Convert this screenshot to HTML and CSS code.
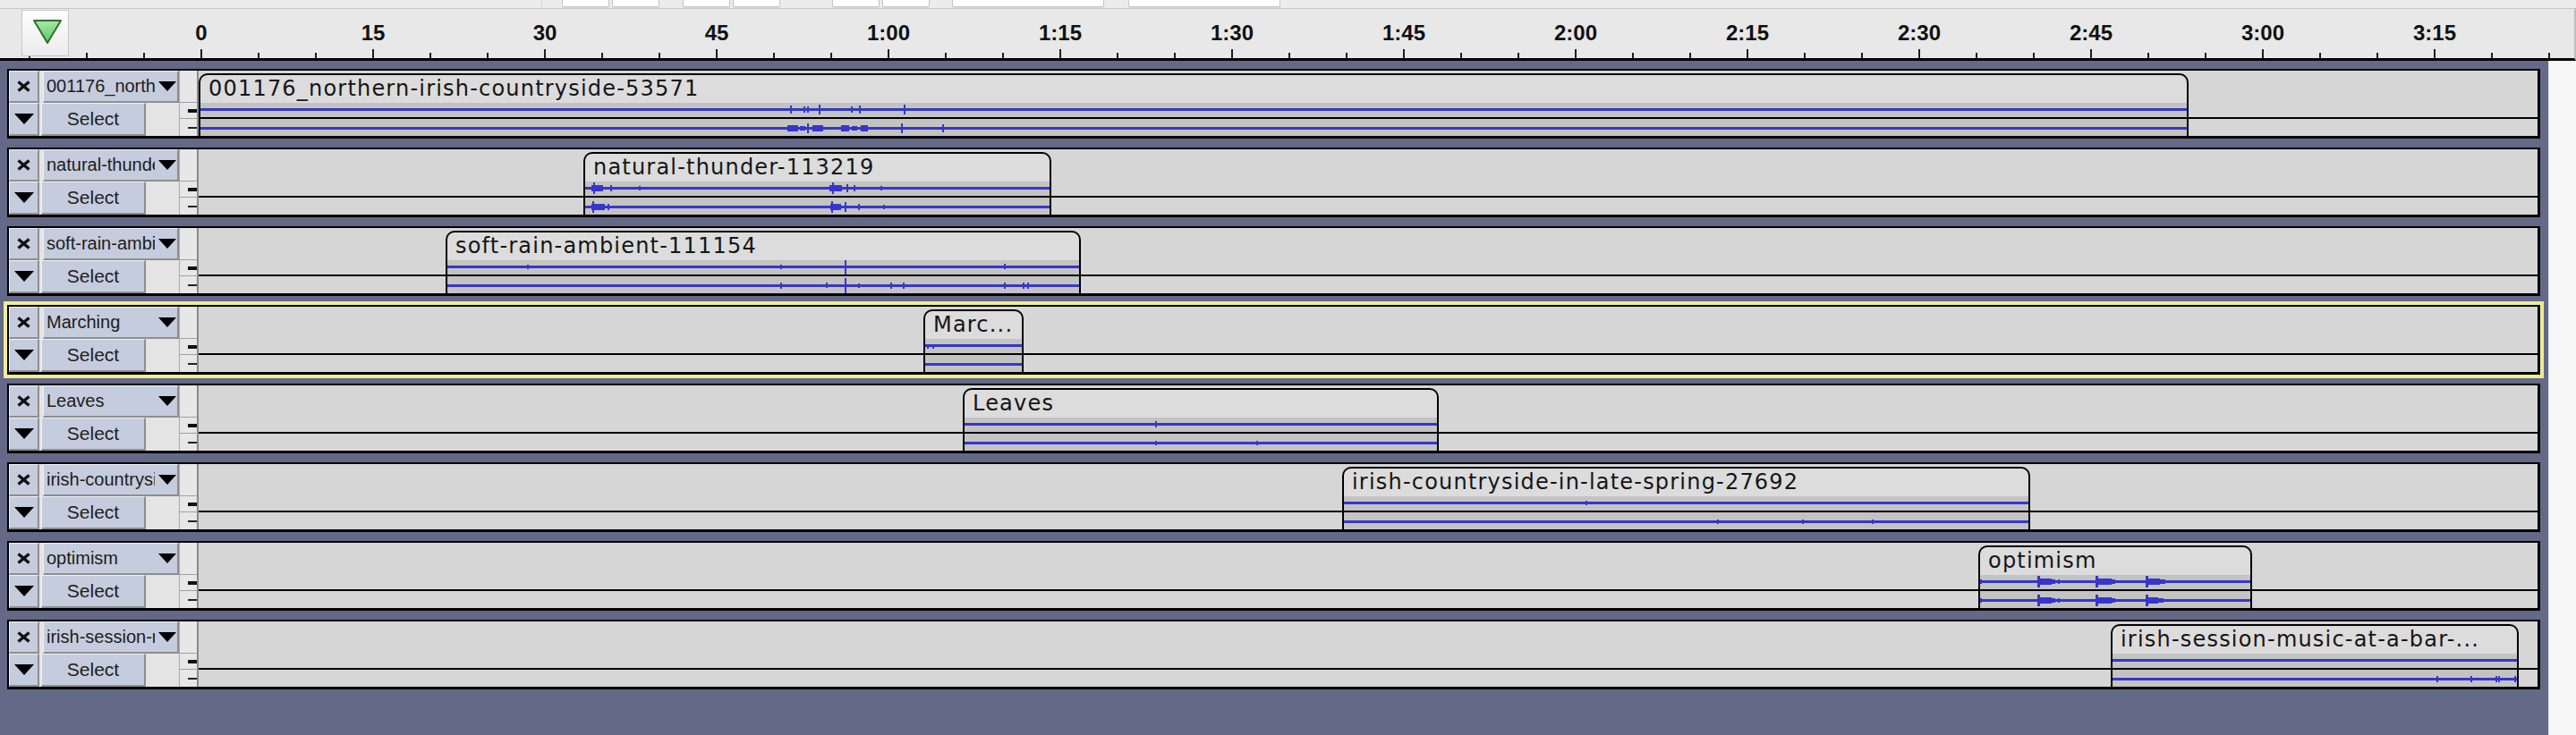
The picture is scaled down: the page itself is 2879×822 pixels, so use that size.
FILE: index.html
```html
<!DOCTYPE html>
<html>
<head>
<meta charset="utf-8">
<title>Tracks</title>
<link rel="stylesheet" href="styles.css">
</head>
<body>
<div class="topstrip">
  <div class="tb-divider"></div>
  <div class="tb-group g1"><div class="tb-btn"></div><div class="tb-btn"></div></div>
  <div class="tb-group g2"><div class="tb-btn"></div><div class="tb-btn"></div></div>
  <div class="tb-group g3"><div class="tb-btn"></div><div class="tb-btn"></div></div>
  <div class="tb-group g4"><div class="tb-btn tb-wide"></div></div>
  <div class="tb-group g5"><div class="tb-btn tb-wide"></div></div>
</div>
<div class="ruler">
  <div class="play-btn">
    <svg width="51" height="50" viewBox="0 0 51 50"><defs><linearGradient id="g" x1="0" y1="0" x2="0" y2="1"><stop offset="0" stop-color="#a6e8a6"/><stop offset="1" stop-color="#62c462"/></linearGradient></defs><path d="M13 11H43L28 36Z" fill="url(#g)" stroke="#2f6f2f" stroke-width="2" stroke-linejoin="round"/></svg>
  </div>
  <div class="ruler-labels">
    <span class="rl">0</span><span class="rl">15</span><span class="rl">30</span><span class="rl">45</span><span class="rl">1:00</span><span class="rl">1:15</span><span class="rl">1:30</span><span class="rl">1:45</span><span class="rl">2:00</span><span class="rl">2:15</span><span class="rl">2:30</span><span class="rl">2:45</span><span class="rl">3:00</span><span class="rl">3:15</span>
  </div>
</div>
<div class="main">
  <div class="tracks">

    <div class="track">
      <div class="panel">
        <div class="prow1">
          <div class="cell c-close"><svg class="ico-x" width="15" height="13" viewBox="0 0 15 13"><path d="M1.5 1.5L13.5 11.5M13.5 1.5L1.5 11.5"/></svg></div>
          <div class="cell c-name"><span class="name">001176_northern-irish-countryside-53571</span><svg class="tri" width="20" height="11" viewBox="0 0 20 11"><path d="M0 0H20L10 11Z"/></svg></div>
        </div>
        <div class="prow2">
          <div class="cell c-menu"><svg class="tri" width="22" height="12" viewBox="0 0 22 12"><path d="M0 0H22L11 12Z"/></svg></div>
          <div class="cell c-select">Select</div>
        </div>
      </div>
      <div class="dashcol"><div class="dc-top"></div><div class="dc-a"><i class="dash-thick"></i></div><div class="dc-b"><i class="dash-thin"></i></div></div>
      <div class="area">
        <div class="clip" style="left:0px;width:2224px">
          <div class="clip-title">001176_northern-irish-countryside-53571</div>
          <div class="ch ch1"><svg class="wave" viewBox="0 0 2220 16" preserveAspectRatio="none"><rect x="0" y="6" width="2220" height="3"/><rect x="659" y="3" width="2" height="9"/><rect x="674" y="4" width="2" height="7"/><rect x="678" y="4" width="2" height="7"/><rect x="691" y="2" width="2" height="11"/><rect x="727" y="4" width="2" height="7"/><rect x="736" y="3" width="2" height="9"/><rect x="786" y="2" width="2" height="11"/></svg></div>
          <div class="sep"></div>
          <div class="ch ch2"><svg class="wave" viewBox="0 0 2220 19" preserveAspectRatio="none"><rect x="0" y="9" width="2220" height="3"/><rect x="656" y="7" width="12" height="7"/><rect x="670" y="8" width="6" height="5"/><rect x="678" y="5" width="2" height="11"/><rect x="684" y="7" width="12" height="7"/><rect x="716" y="7" width="9" height="7"/><rect x="728" y="8" width="6" height="5"/><rect x="738" y="7" width="8" height="7"/><rect x="783" y="5" width="2" height="11"/><rect x="829" y="6" width="2" height="9"/></svg></div>
        </div>
      </div>
    </div>

    <div class="track">
      <div class="panel">
        <div class="prow1">
          <div class="cell c-close"><svg class="ico-x" width="15" height="13" viewBox="0 0 15 13"><path d="M1.5 1.5L13.5 11.5M13.5 1.5L1.5 11.5"/></svg></div>
          <div class="cell c-name"><span class="name">natural-thunder-113219</span><svg class="tri" width="20" height="11" viewBox="0 0 20 11"><path d="M0 0H20L10 11Z"/></svg></div>
        </div>
        <div class="prow2">
          <div class="cell c-menu"><svg class="tri" width="22" height="12" viewBox="0 0 22 12"><path d="M0 0H22L11 12Z"/></svg></div>
          <div class="cell c-select">Select</div>
        </div>
      </div>
      <div class="dashcol"><div class="dc-top"></div><div class="dc-a"><i class="dash-thick"></i></div><div class="dc-b"><i class="dash-thin"></i></div></div>
      <div class="area">
        <div class="clip" style="left:430px;width:523px">
          <div class="clip-title">natural-thunder-113219</div>
          <div class="ch ch1"><svg class="wave" viewBox="0 0 519 16" preserveAspectRatio="none"><rect x="0" y="6" width="519" height="3"/><rect x="7" y="4" width="13" height="7"/><rect x="9" y="1" width="2" height="13"/><rect x="28" y="4" width="2" height="7"/><rect x="60" y="5" width="2" height="5"/><rect x="273" y="4" width="14" height="7"/><rect x="276" y="1" width="2" height="13"/><rect x="292" y="3" width="2" height="9"/><rect x="300" y="4" width="2" height="7"/><rect x="330" y="5" width="2" height="5"/></svg></div>
          <div class="sep"></div>
          <div class="ch ch2"><svg class="wave" viewBox="0 0 519 19" preserveAspectRatio="none"><rect x="0" y="9" width="519" height="3"/><rect x="7" y="7" width="15" height="7"/><rect x="8" y="4" width="2" height="13"/><rect x="25" y="7" width="2" height="7"/><rect x="274" y="7" width="12" height="7"/><rect x="275" y="4" width="2" height="13"/><rect x="290" y="5" width="2" height="11"/><rect x="305" y="7" width="2" height="7"/><rect x="333" y="8" width="2" height="5"/></svg></div>
        </div>
      </div>
    </div>

    <div class="track">
      <div class="panel">
        <div class="prow1">
          <div class="cell c-close"><svg class="ico-x" width="15" height="13" viewBox="0 0 15 13"><path d="M1.5 1.5L13.5 11.5M13.5 1.5L1.5 11.5"/></svg></div>
          <div class="cell c-name"><span class="name">soft-rain-ambient-111154</span><svg class="tri" width="20" height="11" viewBox="0 0 20 11"><path d="M0 0H20L10 11Z"/></svg></div>
        </div>
        <div class="prow2">
          <div class="cell c-menu"><svg class="tri" width="22" height="12" viewBox="0 0 22 12"><path d="M0 0H22L11 12Z"/></svg></div>
          <div class="cell c-select">Select</div>
        </div>
      </div>
      <div class="dashcol"><div class="dc-top"></div><div class="dc-a"><i class="dash-thick"></i></div><div class="dc-b"><i class="dash-thin"></i></div></div>
      <div class="area">
        <div class="clip" style="left:276px;width:710px">
          <div class="clip-title">soft-rain-ambient-111154</div>
          <div class="ch ch1"><svg class="wave" viewBox="0 0 706 16" preserveAspectRatio="none"><rect x="0" y="6" width="706" height="3"/><rect x="89" y="5" width="2" height="5"/><rect x="372" y="5" width="2" height="5"/><rect x="444" y="0" width="2" height="16"/><rect x="622" y="4" width="2" height="6"/></svg></div>
          <div class="sep"></div>
          <div class="ch ch2"><svg class="wave" viewBox="0 0 706 19" preserveAspectRatio="none"><rect x="0" y="9" width="706" height="3"/><rect x="372" y="7" width="2" height="7"/><rect x="423" y="7" width="2" height="6"/><rect x="444" y="2" width="2" height="17"/><rect x="459" y="8" width="2" height="5"/><rect x="495" y="7" width="2" height="7"/><rect x="509" y="7" width="2" height="7"/><rect x="622" y="7" width="2" height="7"/><rect x="643" y="7" width="2" height="7"/><rect x="648" y="7" width="2" height="7"/></svg></div>
        </div>
      </div>
    </div>

    <div class="track selected">
      <div class="panel">
        <div class="prow1">
          <div class="cell c-close"><svg class="ico-x" width="15" height="13" viewBox="0 0 15 13"><path d="M1.5 1.5L13.5 11.5M13.5 1.5L1.5 11.5"/></svg></div>
          <div class="cell c-name"><span class="name">Marching</span><svg class="tri" width="20" height="11" viewBox="0 0 20 11"><path d="M0 0H20L10 11Z"/></svg></div>
        </div>
        <div class="prow2">
          <div class="cell c-menu"><svg class="tri" width="22" height="12" viewBox="0 0 22 12"><path d="M0 0H22L11 12Z"/></svg></div>
          <div class="cell c-select">Select</div>
        </div>
      </div>
      <div class="dashcol"><div class="dc-top"></div><div class="dc-a"><i class="dash-thick"></i></div><div class="dc-b"><i class="dash-thin"></i></div></div>
      <div class="area">
        <div class="clip" style="left:810px;width:112px">
          <div class="clip-title">Marc...</div>
          <div class="ch ch1"><svg class="wave" viewBox="0 0 108 16" preserveAspectRatio="none"><rect x="0" y="6" width="108" height="3"/><rect x="2" y="6" width="2" height="5"/><rect x="8" y="7" width="2" height="4"/></svg></div>
          <div class="sep"></div>
          <div class="ch ch2"><svg class="wave" viewBox="0 0 108 19" preserveAspectRatio="none"><rect x="0" y="9" width="108" height="3"/></svg></div>
        </div>
      </div>
    </div>

    <div class="track">
      <div class="panel">
        <div class="prow1">
          <div class="cell c-close"><svg class="ico-x" width="15" height="13" viewBox="0 0 15 13"><path d="M1.5 1.5L13.5 11.5M13.5 1.5L1.5 11.5"/></svg></div>
          <div class="cell c-name"><span class="name">Leaves</span><svg class="tri" width="20" height="11" viewBox="0 0 20 11"><path d="M0 0H20L10 11Z"/></svg></div>
        </div>
        <div class="prow2">
          <div class="cell c-menu"><svg class="tri" width="22" height="12" viewBox="0 0 22 12"><path d="M0 0H22L11 12Z"/></svg></div>
          <div class="cell c-select">Select</div>
        </div>
      </div>
      <div class="dashcol"><div class="dc-top"></div><div class="dc-a"><i class="dash-thick"></i></div><div class="dc-b"><i class="dash-thin"></i></div></div>
      <div class="area">
        <div class="clip" style="left:854px;width:532px">
          <div class="clip-title">Leaves</div>
          <div class="ch ch1"><svg class="wave" viewBox="0 0 528 16" preserveAspectRatio="none"><rect x="0" y="6" width="528" height="3"/><rect x="213" y="4" width="2" height="7"/></svg></div>
          <div class="sep"></div>
          <div class="ch ch2"><svg class="wave" viewBox="0 0 528 19" preserveAspectRatio="none"><rect x="0" y="9" width="528" height="3"/><rect x="213" y="8" width="2" height="5"/><rect x="326" y="8" width="2" height="5"/></svg></div>
        </div>
      </div>
    </div>

    <div class="track">
      <div class="panel">
        <div class="prow1">
          <div class="cell c-close"><svg class="ico-x" width="15" height="13" viewBox="0 0 15 13"><path d="M1.5 1.5L13.5 11.5M13.5 1.5L1.5 11.5"/></svg></div>
          <div class="cell c-name"><span class="name">irish-countryside-in-late-spring-27692</span><svg class="tri" width="20" height="11" viewBox="0 0 20 11"><path d="M0 0H20L10 11Z"/></svg></div>
        </div>
        <div class="prow2">
          <div class="cell c-menu"><svg class="tri" width="22" height="12" viewBox="0 0 22 12"><path d="M0 0H22L11 12Z"/></svg></div>
          <div class="cell c-select">Select</div>
        </div>
      </div>
      <div class="dashcol"><div class="dc-top"></div><div class="dc-a"><i class="dash-thick"></i></div><div class="dc-b"><i class="dash-thin"></i></div></div>
      <div class="area">
        <div class="clip" style="left:1278px;width:769px">
          <div class="clip-title">irish-countryside-in-late-spring-27692</div>
          <div class="ch ch1"><svg class="wave" viewBox="0 0 765 16" preserveAspectRatio="none"><rect x="0" y="6" width="765" height="3"/><rect x="270" y="5" width="2" height="5"/></svg></div>
          <div class="sep"></div>
          <div class="ch ch2"><svg class="wave" viewBox="0 0 765 19" preserveAspectRatio="none"><rect x="0" y="9" width="765" height="3"/><rect x="417" y="8" width="2" height="5"/><rect x="512" y="8" width="2" height="5"/><rect x="590" y="8" width="2" height="5"/></svg></div>
        </div>
      </div>
    </div>

    <div class="track">
      <div class="panel">
        <div class="prow1">
          <div class="cell c-close"><svg class="ico-x" width="15" height="13" viewBox="0 0 15 13"><path d="M1.5 1.5L13.5 11.5M13.5 1.5L1.5 11.5"/></svg></div>
          <div class="cell c-name"><span class="name">optimism</span><svg class="tri" width="20" height="11" viewBox="0 0 20 11"><path d="M0 0H20L10 11Z"/></svg></div>
        </div>
        <div class="prow2">
          <div class="cell c-menu"><svg class="tri" width="22" height="12" viewBox="0 0 22 12"><path d="M0 0H22L11 12Z"/></svg></div>
          <div class="cell c-select">Select</div>
        </div>
      </div>
      <div class="dashcol"><div class="dc-top"></div><div class="dc-a"><i class="dash-thick"></i></div><div class="dc-b"><i class="dash-thin"></i></div></div>
      <div class="area">
        <div class="clip" style="left:1989px;width:306px">
          <div class="clip-title">optimism</div>
          <div class="ch ch1"><svg class="wave" viewBox="0 0 302 16" preserveAspectRatio="none"><rect x="0" y="6" width="302" height="3"/><rect x="0" y="5" width="2" height="5"/><rect x="64" y="1" width="3" height="13"/><rect x="64" y="4" width="16" height="7"/><rect x="80" y="5" width="4" height="5"/><rect x="87" y="5" width="2" height="5"/><rect x="129" y="1" width="3" height="13"/><rect x="129" y="4" width="18" height="7"/><rect x="147" y="5" width="4" height="5"/><rect x="185" y="1" width="3" height="13"/><rect x="185" y="4" width="16" height="7"/><rect x="201" y="5" width="6" height="5"/></svg></div>
          <div class="sep"></div>
          <div class="ch ch2"><svg class="wave" viewBox="0 0 302 19" preserveAspectRatio="none"><rect x="0" y="9" width="302" height="3"/><rect x="0" y="8" width="2" height="5"/><rect x="64" y="4" width="3" height="13"/><rect x="64" y="7" width="16" height="7"/><rect x="80" y="8" width="4" height="5"/><rect x="87" y="8" width="2" height="5"/><rect x="129" y="4" width="3" height="13"/><rect x="129" y="7" width="18" height="7"/><rect x="147" y="8" width="4" height="5"/><rect x="185" y="4" width="3" height="13"/><rect x="185" y="7" width="14" height="7"/><rect x="199" y="8" width="6" height="5"/></svg></div>
        </div>
      </div>
    </div>

    <div class="track">
      <div class="panel">
        <div class="prow1">
          <div class="cell c-close"><svg class="ico-x" width="15" height="13" viewBox="0 0 15 13"><path d="M1.5 1.5L13.5 11.5M13.5 1.5L1.5 11.5"/></svg></div>
          <div class="cell c-name"><span class="name">irish-session-music-at-a-bar</span><svg class="tri" width="20" height="11" viewBox="0 0 20 11"><path d="M0 0H20L10 11Z"/></svg></div>
        </div>
        <div class="prow2">
          <div class="cell c-menu"><svg class="tri" width="22" height="12" viewBox="0 0 22 12"><path d="M0 0H22L11 12Z"/></svg></div>
          <div class="cell c-select">Select</div>
        </div>
      </div>
      <div class="dashcol"><div class="dc-top"></div><div class="dc-a"><i class="dash-thick"></i></div><div class="dc-b"><i class="dash-thin"></i></div></div>
      <div class="area">
        <div class="clip" style="left:2137px;width:456px">
          <div class="clip-title">irish-session-music-at-a-bar-...</div>
          <div class="ch ch1"><svg class="wave" viewBox="0 0 452 16" preserveAspectRatio="none"><rect x="0" y="6" width="452" height="3"/></svg></div>
          <div class="sep"></div>
          <div class="ch ch2"><svg class="wave" viewBox="0 0 452 19" preserveAspectRatio="none"><rect x="0" y="9" width="452" height="3"/><rect x="362" y="7" width="2" height="7"/><rect x="400" y="7" width="2" height="7"/><rect x="428" y="7" width="2" height="7"/><rect x="431" y="7" width="2" height="7"/><rect x="449" y="7" width="2" height="7"/></svg></div>
        </div>
      </div>
    </div>

  </div>
  <div class="vscroll"></div>
</div>
</body>
</html>
```

FILE: styles.css
```css
* { box-sizing: border-box; }
html, body { margin: 0; padding: 0; }
body {
  width: 2879px;
  height: 822px;
  overflow: hidden;
  background: #646987;
  font-family: "Liberation Sans", Arial, sans-serif;
}

/* top toolbar remnant */
.topstrip {
  height: 10px;
  background: #ececec;
  border-bottom: 1px solid #c6c6c6;
  display: flex;
  padding-left: 605px;
}
.tb-divider { width: 1px; height: 9px; background: #d0d0d0; }
.tb-group { display: flex; gap: 3px; }
.tb-btn {
  width: 53px;
  height: 8px;
  background: #ffffff;
  border: 1px solid #c4c4c4;
  border-top: none;
  border-radius: 0 0 2px 2px;
  box-shadow: 0 1px 0 #dadada;
}
.tb-wide { width: 170px; }
.g1 { margin-left: 22px; }
.g2 { margin-left: 26px; }
.g3 { margin-left: 58px; }
.g4 { margin-left: 25px; }
.g5 { margin-left: 27px; }

/* ruler */
.ruler {
  height: 58px;
  background-color: #e8e8e8;
  background-image:
    repeating-linear-gradient(to right, #1e1e1e 0 2px, transparent 2px 192px),
    repeating-linear-gradient(to right, #1e1e1e 0 2px, transparent 2px 64px);
  background-size: 100% 10px, 100% 6px;
  background-position: 32px 100%, 32px 100%;
  background-repeat: no-repeat;
  border-bottom: 3px solid #000;
  border-right: 2px solid #bdbdbd;
  display: flex;
  align-items: flex-start;
  padding-left: 24px;
}
.play-btn {
  width: 53px;
  height: 52px;
  margin-top: 1px;
  flex-shrink: 0;
  border: 1px solid #c6c6c6;
  background: linear-gradient(#fefefe, #ebebeb);
}
.play-btn svg { display: block; }
.ruler-labels {
  display: flex;
  margin-left: 52px;
  margin-top: 15px;
}
.rl {
  width: 192px;
  flex-shrink: 0;
  text-align: center;
  font-family: "Liberation Sans", Arial, sans-serif;
  font-weight: bold;
  font-size: 24px;
  line-height: 24px;
  color: #111;
}

/* main area */
.main { display: flex; height: 754px; }
.tracks {
  width: 2848px;
  flex-shrink: 0;
  background: #646987;
  padding: 9px 0 0 8px;
  display: flex;
  flex-direction: column;
  gap: 10px;
}
.vscroll {
  flex: 1;
  background: #f6f6f6;
  border-left: 1px solid #e4e4e4;
}

.track {
  width: 2831px;
  height: 78px;
  flex-shrink: 0;
  border: 2px solid #000;
  border-right-width: 3px;
  border-bottom-width: 3px;
  display: flex;
  background: #d6d6d6;
}
.track.selected { outline: 4px solid #efec92; }

/* control panel */
.panel {
  width: 190px;
  flex-shrink: 0;
  display: flex;
  flex-direction: column;
  background: #e4e4e4;
}
.prow1 { height: 36px; display: flex; }
.prow2 { height: 37px; display: flex; }
.cell {
  background: #c5ccdd;
  border-style: solid;
  border-width: 1px 2px 2px 1px;
  border-color: #eef0f6 #8e8e8e #8e8e8e #eef0f6;
  display: flex;
  align-items: center;
  justify-content: center;
}
.c-close { width: 34px; }
.c-menu { width: 34px; }
.c-name {
  width: 152px;
  margin-left: 4px;
  justify-content: flex-start;
  padding: 0 1px 0 3px;
}
.c-select {
  width: 117px;
  margin-left: 2px;
  font-size: 21px;
  color: #1e1e1e;
}
.name {
  flex: 1;
  min-width: 0;
  overflow: hidden;
  white-space: nowrap;
  font-size: 20px;
  color: #1c1c1c;
}
.tri { display: block; flex-shrink: 0; fill: #000; }
.c-name .tri { margin-left: 4px; }
.ico-x { display: block; fill: none; stroke: #111; stroke-width: 3.4; }

/* dash column */
.dashcol {
  width: 22px;
  flex-shrink: 0;
  display: flex;
  flex-direction: column;
  background: #e7e7e7;
  border-left: 1px solid #a8a8a8;
  border-right: 2px solid #8a8a8a;
}
.dc-top { height: 36px; border-bottom: 1px solid #a0a0a0; }
.dc-a {
  height: 18px;
  border-bottom: 1px solid #a0a0a0;
  display: flex;
  align-items: center;
  justify-content: flex-end;
}
.dc-b {
  flex: 1;
  display: flex;
  align-items: center;
  justify-content: flex-end;
}
.dash-thick { display: block; width: 10px; height: 4px; background: #111; }
.dash-thin { display: block; width: 10px; height: 2px; background: #222; }

/* timeline area */
.area {
  flex: 1;
  position: relative;
  background:
    linear-gradient(#000, #000) 0 52px / 100% 2px no-repeat,
    #d6d6d6;
}
.clip {
  position: absolute;
  top: 3px;
  bottom: 0;
  border: 2px solid #000;
  border-bottom: none;
  border-radius: 10px 10px 0 0;
  background: #dcdcdc;
  display: flex;
  flex-direction: column;
  overflow: hidden;
}
.clip-title {
  height: 31px;
  line-height: 31px;
  padding-left: 9px;
  font-family: "DejaVu Sans", "Liberation Sans", sans-serif;
  font-size: 24px;
  letter-spacing: 1.2px;
  color: #151515;
  white-space: nowrap;
  overflow: hidden;
}
.ch { background: #c3c3c3; }
.ch1 { height: 16px; }
.ch2 { flex: 1; }
.sep { height: 2px; background: #000; }
.wave { display: block; width: 100%; height: 100%; fill: #3636cc; }
```
